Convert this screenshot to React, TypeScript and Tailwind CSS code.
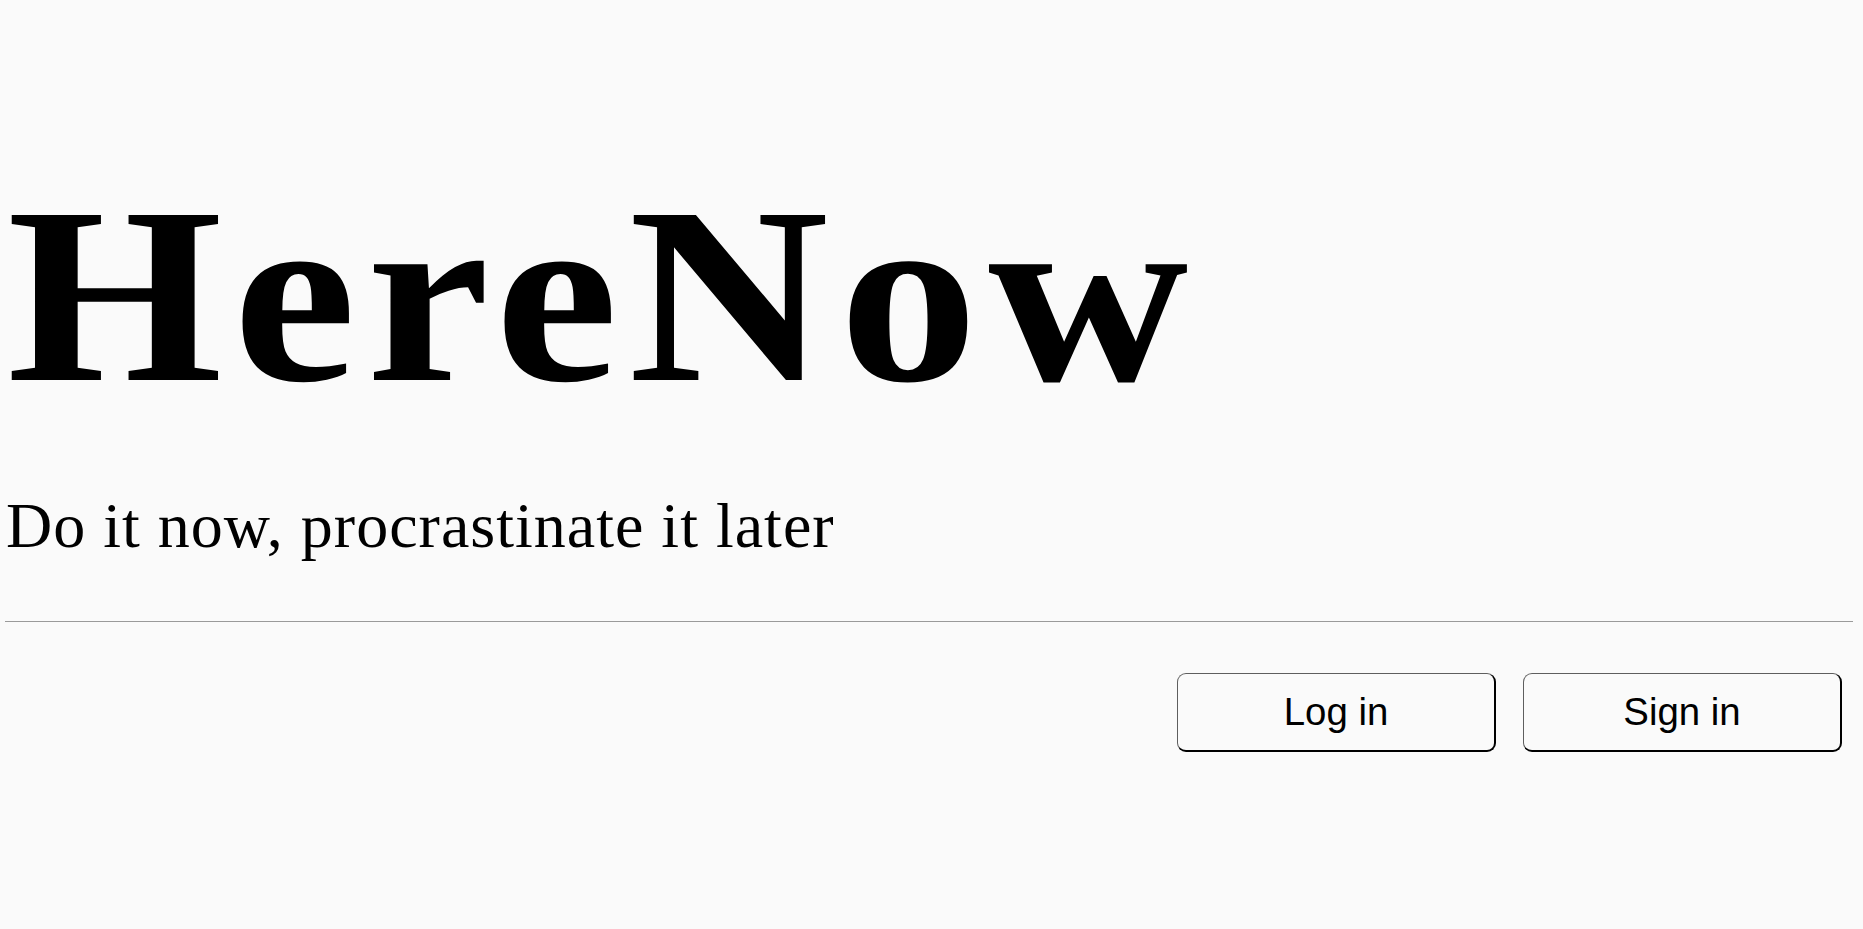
export default function App() {
  return (
    <div className="min-h-screen overflow-hidden bg-[#fafafa] pl-[5px] pr-[10px] pt-[169px] text-black">
      <h1 className="ml-[2px] w-fit origin-left scale-x-[1.1] font-['Liberation_Serif',serif] font-bold text-[252px] leading-none tracking-[9.5px] whitespace-nowrap">
        HereNow
      </h1>
      <p className="ml-[1px] mt-[73px] font-['Liberation_Serif',serif] text-[64px] leading-none tracking-[1px] whitespace-nowrap">
        Do it now, procrastinate it later
      </p>
      <div className="mt-[63px] h-px bg-[#9a9a9a]" />
      <div className="mt-[51px] flex justify-end gap-[27px] pr-[11px]">
        <button className="flex h-[79px] w-[319px] items-center justify-center rounded-[9px] border-t-[1.5px] border-l-[1.5px] border-b-2 border-r-2 border-t-[#5e5e5e] border-l-[#5e5e5e] border-b-black border-r-black bg-[#fafafa] font-['Liberation_Sans',Arial,sans-serif] text-[38.4px] leading-none">
          Log in
        </button>
        <button className="flex h-[79px] w-[319px] items-center justify-center rounded-[9px] border-t-[1.5px] border-l-[1.5px] border-b-2 border-r-2 border-t-[#5e5e5e] border-l-[#5e5e5e] border-b-black border-r-black bg-[#fafafa] font-['Liberation_Sans',Arial,sans-serif] text-[38.4px] leading-none">
          Sign in
        </button>
      </div>
    </div>
  );
}
